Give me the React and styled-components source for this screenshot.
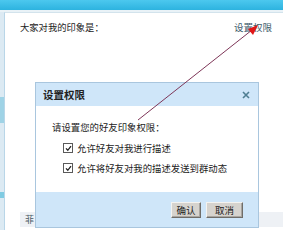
import React from "react";
import styled, { createGlobalStyle } from "styled-components";

const GlobalStyle = createGlobalStyle`
  html, body {
    margin: 0;
    padding: 0;
    background: #ffffff;
  }
  body {
    font-family: "Noto Sans CJK SC", "Noto Sans", sans-serif;
    color: #222;
  }
`;

const Page = styled.div`
  position: relative;
  width: 283px;
  height: 230px;
  overflow: hidden;
  display: flex;
  flex-direction: column;
  background: #ffffff;
`;

const TopBar = styled.div`
  height: 10px;
  background: linear-gradient(#4cc8ee, #2db3df);
`;

const TopGap = styled.div`
  height: 2px;
  background: #e9f2f7;
`;

const Main = styled.div`
  flex: 1;
  display: flex;
`;

const SideStrip = styled.div`
  width: 4px;
  background: linear-gradient(
    #dceaf3 0px,
    #dceaf3 85px,
    #9fd3e6 85px,
    #9fd3e6 111px,
    #dceaf3 111px,
    #dceaf3 180px,
    #7fcbe2 180px,
    #7fcbe2 186px,
    #dceaf3 186px
  );
`;

const Panel = styled.div`
  flex: 1;
  display: flex;
  flex-direction: column;
  border-left: 1px solid #b9d6e8;
  border-top: 1px solid #d3e3ec;
`;

const InfoRow = styled.div`
  display: flex;
  justify-content: space-between;
  align-items: center;
  padding: 7px 11px 0 15px;
  font-size: 9.3px;
  line-height: 14px;
`;

const Link = styled.span`
  color: #3d5b6b;
  font-size: 9.5px;
`;

const Spacer = styled.div`
  flex: 1;
`;

const BottomStrip = styled.div`
  margin: 0 0 3px 15px;
  height: 15px;
  background: #eef1f5;
  display: flex;
  align-items: center;
  padding-left: 5px;
  font-size: 9px;
  color: #4a5a66;
`;

const Dialog = styled.div`
  position: absolute;
  left: 35px;
  top: 82px;
  width: 222px;
  height: 144px;
  border: 1px solid #a9c6de;
  background: #ffffff;
  display: flex;
  flex-direction: column;
`;

const DialogHeader = styled.div`
  height: 23px;
  background: #cfe6f9;
  display: flex;
  align-items: center;
  justify-content: space-between;
  padding: 0 8px 0 7px;
`;

const Title = styled.span`
  font-size: 10.5px;
  font-weight: bold;
  color: #222;
`;

const Close = styled.svg`
  width: 8px;
  height: 8px;
`;

const DialogBody = styled.div`
  height: 86px;
  padding: 14px 0 0 16px;
  box-sizing: border-box;
  display: flex;
  flex-direction: column;
  font-size: 9.4px;
  line-height: 14px;
`;

const OptionList = styled.div`
  display: flex;
  flex-direction: column;
  gap: 6px;
  margin: 7px 0 0 11px;
`;

const Option = styled.label`
  display: flex;
  align-items: center;
  gap: 4px;
`;

const Box = styled.span`
  width: 8px;
  height: 8px;
  border: 1px solid #5a5a5a;
  background: #fff;
  display: flex;
  align-items: center;
  justify-content: center;
`;

const DialogFooter = styled.div`
  flex: 1;
  background: #cfe6f9;
  display: flex;
  align-items: center;
  justify-content: flex-end;
  gap: 5px;
  padding-right: 15px;
`;

const Button = styled.button`
  width: ${(props) => props.w}px;
  height: 16px;
  padding: 0;
  font-family: "Noto Sans CJK SC", sans-serif;
  font-size: 9.5px;
  line-height: 12px;
  color: #222;
  background: #d6d3ce;
  border: 1px solid;
  border-color: #f4f3f0 #6f6d69 #6f6d69 #f4f3f0;
  box-shadow: inset -1px -1px 0 #a8a5a0;
`;

const Overlay = styled.svg`
  position: absolute;
  left: 0;
  top: 0;
  width: 283px;
  height: 230px;
  pointer-events: none;
`;

const Check = () => (
  <svg width="7" height="7" viewBox="0 0 7 7">
    <path d="M1 3.4 L2.8 5.3 L6 1.2" fill="none" stroke="#222" strokeWidth="1.3" />
  </svg>
);

export default function App() {
  return (
    <>
      <GlobalStyle />
      <Page>
        <TopBar />
        <TopGap />
        <Main>
          <SideStrip />
          <Panel>
            <InfoRow>
              <span>大家对我的印象是：</span>
              <Link>设置权限</Link>
            </InfoRow>
            <Spacer />
            <BottomStrip>菲</BottomStrip>
          </Panel>
        </Main>

        <Dialog>
          <DialogHeader>
            <Title>设置权限</Title>
            <Close viewBox="0 0 8 8">
              <path d="M1 1 L7 7 M7 1 L1 7" stroke="#4f7e92" strokeWidth="1.6" />
            </Close>
          </DialogHeader>
          <DialogBody>
            <span>请设置您的好友印象权限：</span>
            <OptionList>
              <Option>
                <Box><Check /></Box>
                允许好友对我进行描述
              </Option>
              <Option>
                <Box><Check /></Box>
                允许将好友对我的描述发送到群动态
              </Option>
            </OptionList>
          </DialogBody>
          <DialogFooter>
            <Button w={30}>确认</Button>
            <Button w={37}>取消</Button>
          </DialogFooter>
        </Dialog>

        <Overlay viewBox="0 0 283 230">
          <line x1="138" y1="120" x2="252" y2="30" stroke="#7e3658" strokeWidth="1" />
          <polygon points="258,25 248,29 253,35" fill="#e01818" />
        </Overlay>
      </Page>
    </>
  );
}
